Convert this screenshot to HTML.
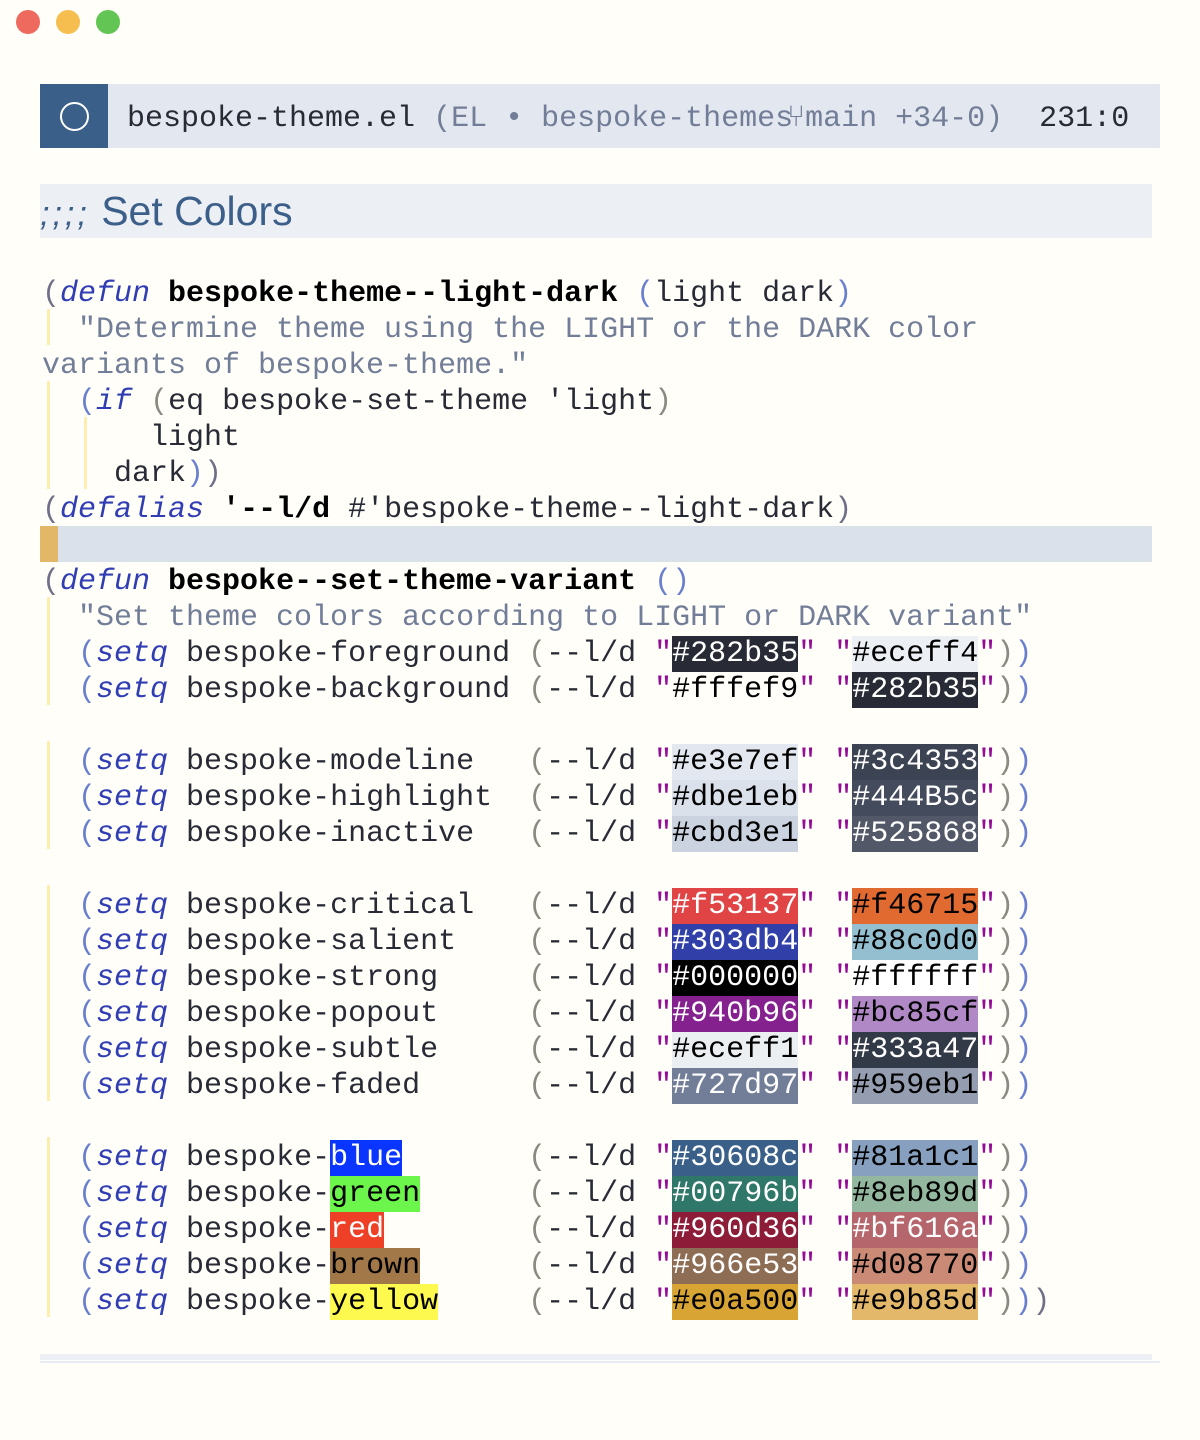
<!DOCTYPE html>
<html><head><meta charset="utf-8"><style>
html,body{margin:0;padding:0;width:1200px;height:1440px;background:#fffef9;overflow:hidden}
.a{position:absolute}
.l{position:absolute;left:42px;height:36px;line-height:36px;font-family:"Liberation Mono",monospace;font-size:30px;white-space:pre;color:#282b35;margin-top:3px}
.k{color:#303db4;font-style:italic}
.b{font-weight:bold;color:#000}
.s{color:#727d97}
.p1{color:#6f7088}.p2{color:#6a7fd0}.p3{color:#8a8a80}
.q{color:#940b96}
.sw{display:inline-block;height:36px}
.w{color:#fff}.n{color:#000}
.g{position:absolute;width:3px;background:#fbeeb0}
</style></head><body>
<div class="a" style="left:16px;top:10px;width:24px;height:24px;border-radius:50%;background:#ee6a5f"></div>
<div class="a" style="left:56px;top:10px;width:24px;height:24px;border-radius:50%;background:#f5be4f"></div>
<div class="a" style="left:96px;top:10px;width:24px;height:24px;border-radius:50%;background:#62c554"></div>

<div class="a" style="left:40px;top:84px;width:1120px;height:64px;background:#e3e7ef"></div>
<div class="a" style="left:40px;top:84px;width:68px;height:64px;background:#3a5f88"></div>
<div class="a" style="left:60px;top:102px;width:25px;height:25px;border:2px solid #fff;border-radius:50%"></div>
<div class="l" style="left:127px;top:98px;color:#282b35">bespoke-theme.el <span style="color:#727d97">(EL • bespoke-themes</span><span style="color:#727d97;margin-left:-6px">⑂</span><span style="color:#727d97">main +34-0)</span>  231:0</div>

<div class="a" style="left:40px;top:184px;width:1112px;height:54px;background:#eceff4"></div>
<div class="a" style="left:40px;top:186px;height:50px;line-height:50px;font-family:'Liberation Sans',sans-serif;font-size:41px;color:#3c5f8a"><span style="font-style:italic;font-size:34px;letter-spacing:3px">;;;;</span> Set Colors</div>

<div class="a" style="left:40px;top:526px;width:1112px;height:36px;background:#dbe1eb"></div>
<div class="a" style="left:40px;top:526px;width:18px;height:36px;background:#e2b767"></div>

<div class="g" style="left:47px;top:309px;height:36px"></div>
<div class="g" style="left:47px;top:381px;height:108px"></div>
<div class="g" style="left:84px;top:417px;height:72px"></div>
<div class="g" style="left:47px;top:597px;height:108px"></div>
<div class="g" style="left:47px;top:741px;height:108px"></div>
<div class="g" style="left:47px;top:885px;height:216px"></div>
<div class="g" style="left:47px;top:1137px;height:180px"></div>

<div class="l" style="top:273px"><span class="p1">(</span><span class="k">defun</span> <span class="b">bespoke-theme--light-dark</span> <span class="p2">(</span>light dark<span class="p2">)</span></div>
<div class="l" style="top:309px"><span class="s">  "Determine theme using the LIGHT or the DARK color</span></div>
<div class="l" style="top:345px"><span class="s">variants of bespoke-theme."</span></div>
<div class="l" style="top:381px">  <span class="p2">(</span><span class="k">if</span> <span class="p3">(</span>eq bespoke-set-theme 'light<span class="p3">)</span></div>
<div class="l" style="top:417px">      light</div>
<div class="l" style="top:453px">    dark<span class="p2">)</span><span class="p1">)</span></div>
<div class="l" style="top:489px"><span class="p1">(</span><span class="k">defalias</span> <span class="b">'--l/d</span> #'bespoke-theme--light-dark<span class="p1">)</span></div>

<div class="l" style="top:561px"><span class="p1">(</span><span class="k">defun</span> <span class="b">bespoke--set-theme-variant</span> <span class="p2">()</span></div>
<div class="l" style="top:597px"><span class="s">  "Set theme colors according to LIGHT or DARK variant"</span></div>

<div class="l" style="top:633px">  <span class="p2">(</span><span class="k">setq</span> bespoke-foreground <span class="p3">(</span>--l/d <span class="q">"</span><span class="sw w" style="background:#282b35">#282b35</span><span class="q">"</span> <span class="q">"</span><span class="sw n" style="background:#eceff4">#eceff4</span><span class="q">"</span><span class="p3">)</span><span class="p2">)</span></div>
<div class="l" style="top:669px">  <span class="p2">(</span><span class="k">setq</span> bespoke-background <span class="p3">(</span>--l/d <span class="q">"</span><span class="sw n">#fffef9</span><span class="q">"</span> <span class="q">"</span><span class="sw w" style="background:#282b35">#282b35</span><span class="q">"</span><span class="p3">)</span><span class="p2">)</span></div>

<div class="l" style="top:741px">  <span class="p2">(</span><span class="k">setq</span> bespoke-modeline   <span class="p3">(</span>--l/d <span class="q">"</span><span class="sw n" style="background:#e3e7ef">#e3e7ef</span><span class="q">"</span> <span class="q">"</span><span class="sw w" style="background:#3c4353">#3c4353</span><span class="q">"</span><span class="p3">)</span><span class="p2">)</span></div>
<div class="l" style="top:777px">  <span class="p2">(</span><span class="k">setq</span> bespoke-highlight  <span class="p3">(</span>--l/d <span class="q">"</span><span class="sw n" style="background:#dbe1eb">#dbe1eb</span><span class="q">"</span> <span class="q">"</span><span class="sw w" style="background:#444b5c">#444B5c</span><span class="q">"</span><span class="p3">)</span><span class="p2">)</span></div>
<div class="l" style="top:813px">  <span class="p2">(</span><span class="k">setq</span> bespoke-inactive   <span class="p3">(</span>--l/d <span class="q">"</span><span class="sw n" style="background:#cbd3e1">#cbd3e1</span><span class="q">"</span> <span class="q">"</span><span class="sw w" style="background:#525868">#525868</span><span class="q">"</span><span class="p3">)</span><span class="p2">)</span></div>

<div class="l" style="top:885px">  <span class="p2">(</span><span class="k">setq</span> bespoke-critical   <span class="p3">(</span>--l/d <span class="q">"</span><span class="sw w" style="background:#e04444">#f53137</span><span class="q">"</span> <span class="q">"</span><span class="sw n" style="background:#e06a30">#f46715</span><span class="q">"</span><span class="p3">)</span><span class="p2">)</span></div>
<div class="l" style="top:921px">  <span class="p2">(</span><span class="k">setq</span> bespoke-salient    <span class="p3">(</span>--l/d <span class="q">"</span><span class="sw w" style="background:#3040a8">#303db4</span><span class="q">"</span> <span class="q">"</span><span class="sw n" style="background:#94bfd0">#88c0d0</span><span class="q">"</span><span class="p3">)</span><span class="p2">)</span></div>
<div class="l" style="top:957px">  <span class="p2">(</span><span class="k">setq</span> bespoke-strong     <span class="p3">(</span>--l/d <span class="q">"</span><span class="sw w" style="background:#000000">#000000</span><span class="q">"</span> <span class="q">"</span><span class="sw n" style="background:#ffffff">#ffffff</span><span class="q">"</span><span class="p3">)</span><span class="p2">)</span></div>
<div class="l" style="top:993px">  <span class="p2">(</span><span class="k">setq</span> bespoke-popout     <span class="p3">(</span>--l/d <span class="q">"</span><span class="sw w" style="background:#85208f">#940b96</span><span class="q">"</span> <span class="q">"</span><span class="sw n" style="background:#b088c6">#bc85cf</span><span class="q">"</span><span class="p3">)</span><span class="p2">)</span></div>
<div class="l" style="top:1029px">  <span class="p2">(</span><span class="k">setq</span> bespoke-subtle     <span class="p3">(</span>--l/d <span class="q">"</span><span class="sw n" style="background:#eceff1">#eceff1</span><span class="q">"</span> <span class="q">"</span><span class="sw w" style="background:#333a47">#333a47</span><span class="q">"</span><span class="p3">)</span><span class="p2">)</span></div>
<div class="l" style="top:1065px">  <span class="p2">(</span><span class="k">setq</span> bespoke-faded      <span class="p3">(</span>--l/d <span class="q">"</span><span class="sw w" style="background:#727d97">#727d97</span><span class="q">"</span> <span class="q">"</span><span class="sw n" style="background:#959eb1">#959eb1</span><span class="q">"</span><span class="p3">)</span><span class="p2">)</span></div>

<div class="l" style="top:1137px">  <span class="p2">(</span><span class="k">setq</span> bespoke-<span class="sw w" style="background:#0a35ff">blue</span>       <span class="p3">(</span>--l/d <span class="q">"</span><span class="sw w" style="background:#3a5f88">#30608c</span><span class="q">"</span> <span class="q">"</span><span class="sw n" style="background:#87a0bf">#81a1c1</span><span class="q">"</span><span class="p3">)</span><span class="p2">)</span></div>
<div class="l" style="top:1173px">  <span class="p2">(</span><span class="k">setq</span> bespoke-<span class="sw n" style="background:#6cf54a">green</span>      <span class="p3">(</span>--l/d <span class="q">"</span><span class="sw w" style="background:#2f7768">#00796b</span><span class="q">"</span> <span class="q">"</span><span class="sw n" style="background:#94b89f">#8eb89d</span><span class="q">"</span><span class="p3">)</span><span class="p2">)</span></div>
<div class="l" style="top:1209px">  <span class="p2">(</span><span class="k">setq</span> bespoke-<span class="sw w" style="background:#ee4027">red</span>        <span class="p3">(</span>--l/d <span class="q">"</span><span class="sw w" style="background:#8c1c38">#960d36</span><span class="q">"</span> <span class="q">"</span><span class="sw w" style="background:#b5656c">#bf616a</span><span class="q">"</span><span class="p3">)</span><span class="p2">)</span></div>
<div class="l" style="top:1245px">  <span class="p2">(</span><span class="k">setq</span> bespoke-<span class="sw n" style="background:#a27848">brown</span>      <span class="p3">(</span>--l/d <span class="q">"</span><span class="sw w" style="background:#8e6d55">#966e53</span><span class="q">"</span> <span class="q">"</span><span class="sw n" style="background:#cb8a75">#d08770</span><span class="q">"</span><span class="p3">)</span><span class="p2">)</span></div>
<div class="l" style="top:1281px">  <span class="p2">(</span><span class="k">setq</span> bespoke-<span class="sw n" style="background:#fdf94f">yellow</span>     <span class="p3">(</span>--l/d <span class="q">"</span><span class="sw n" style="background:#d8a535">#e0a500</span><span class="q">"</span> <span class="q">"</span><span class="sw n" style="background:#e3b86b">#e9b85d</span><span class="q">"</span><span class="p3">)</span><span class="p2">)</span><span class="p1">)</span></div>

<div class="a" style="left:40px;top:1354px;width:1112px;height:6px;background:#eceff4"></div>
<div class="a" style="left:40px;top:1361px;width:1120px;height:2px;background:#e8ecf2"></div>
</body></html>
